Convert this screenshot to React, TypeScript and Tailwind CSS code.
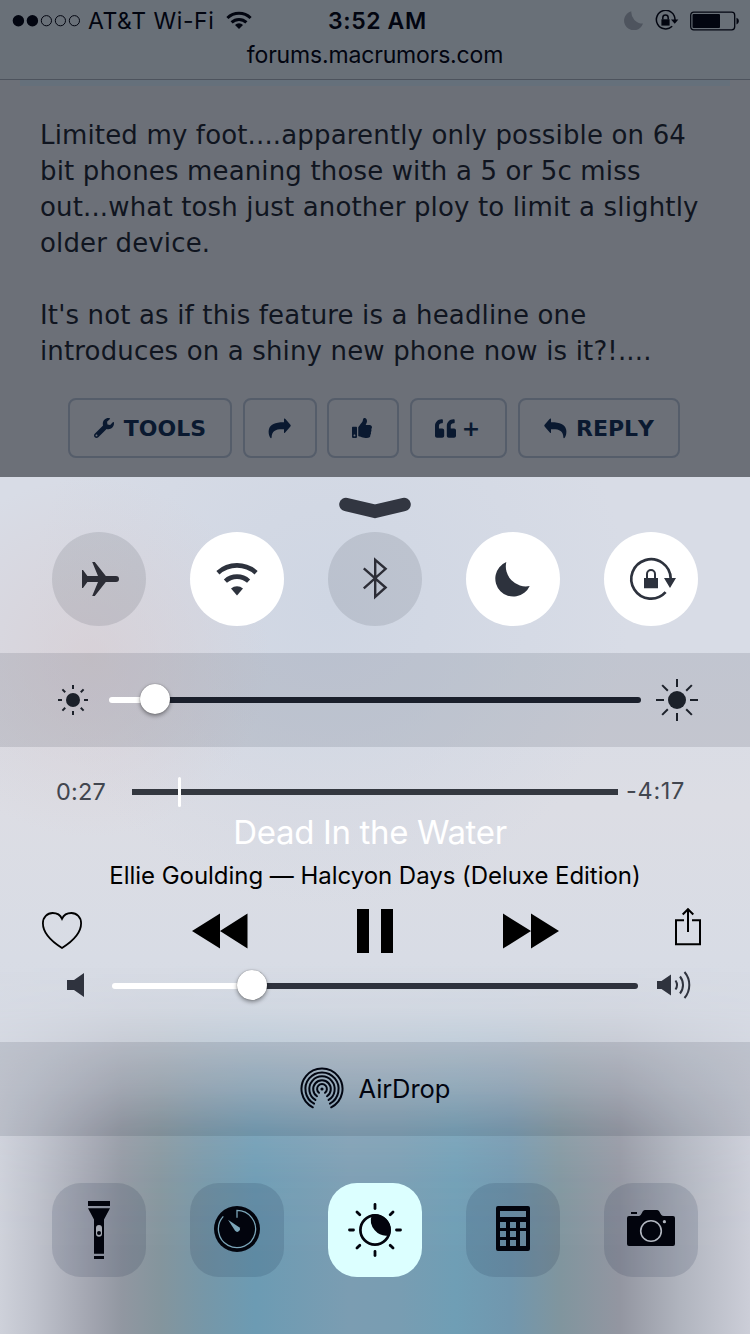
import * as React from 'react';
import { FaQuoteLeft, FaThumbsUp, FaWrench } from 'react-icons/fa';
import { twMerge } from 'tailwind-merge';

const SF = "font-['Inter','Liberation_Sans',sans-serif]";

interface SliderProps {
	value: number;
	className?: string;
	trackClassName?: string;
}

function Slider({ value, className, trackClassName }: SliderProps) {
	return (
		<div className={twMerge('relative flex h-1.5 shrink-0', className)}>
			<div className="h-1.5 rounded-l-[3px] bg-white" style={{ width: value }} />
			<div className={twMerge('h-1.5 flex-1 rounded-r-[3px]', trackClassName)} />
			<div
				className="absolute -top-[13px] size-[30px] -translate-x-1/2 rounded-full bg-white shadow-[0_2px_4px_rgba(0,0,0,0.4),0_0_1px_rgba(0,0,0,0.5)]"
				style={{ left: value }}
			/>
		</div>
	);
}

interface SunProps {
	size: number;
	core: number;
	inner: number;
	outer: number;
	className?: string;
}

function Sun({ size, core, inner, outer, className }: SunProps) {
	return (
		<svg
			width={size}
			height={size}
			viewBox={`${-size / 2} ${-size / 2} ${size} ${size}`}
			className={twMerge('shrink-0 text-[#1c212a]', className)}
		>
			<circle r={core} fill="currentColor" />
			{[0, 45, 90, 135, 180, 225, 270, 315].map((a) => (
				<line key={a} x1={inner} x2={outer} y1="0" y2="0" stroke="currentColor" strokeWidth="2" transform={`rotate(${a})`} />
			))}
		</svg>
	);
}

function StatusBar() {
	return (
		<div className="flex h-[42px] items-center pl-3">
			<svg width="70" height="14" viewBox="0 0 70 14" className="shrink-0">
				{[0, 1, 2, 3, 4].map((i) => (
					<circle
						key={i}
						cx={6.4 + i * 14}
						cy="6.7"
						r={i < 2 ? 5.7 : 5.1}
						fill={i < 2 ? '#020510' : 'none'}
						stroke={i < 2 ? 'none' : '#020510'}
						strokeWidth="1"
					/>
				))}
			</svg>
			<span className="ml-[6px] w-[138px] shrink-0 text-[23px] tracking-[0.55px] whitespace-nowrap">AT&amp;T Wi-Fi</span>
			<svg width="26" height="20" viewBox="0 0 26 20" className="-mt-[3px] shrink-0" fill="none" stroke="#020510" strokeWidth="3">
				<path d="M1.4 8a16.7 16.7 0 0 1 23.2 0" />
				<path d="M5.6 12.4a10.6 10.6 0 0 1 14.8 0" />
				<path d="M13 19l-4-4.1a5.6 5.6 0 0 1 8 0z" fill="#020510" stroke="none" />
			</svg>
			<span className="ml-[76px] w-[296px] shrink-0 text-[23px] font-semibold tracking-[0.6px] whitespace-nowrap">3:52 AM</span>
			<svg width="20" height="20" viewBox="0 0 20 20" className="-mt-0.5 shrink-0">
				<path d="M7.3 1.2A11.5 11.5 0 0 0 19 13.6 9.7 9.7 0 1 1 7.3 1.2z" fill="#4e545e" />
			</svg>
			<svg width="24" height="22" viewBox="0 0 24 22" className="ml-[11px] shrink-0" fill="none" stroke="#020510" strokeWidth="1.5">
				<path d="M20 10a9.3 9.3 0 1 0-2.8 6.3" />
				<path d="M16 9.6h7.4l-3.7 4.2z" fill="#020510" stroke="none" />
				<path d="M6.4 9.3h8.2v6.3H6.4z" fill="#020510" stroke="none" />
				<path d="M7.8 9.5V7.7a2.7 2.7 0 0 1 5.4 0v1.8" />
			</svg>
			<svg width="50" height="20" viewBox="0 0 50 20" className="-mt-px ml-[11px] shrink-0">
				<rect x="0.7" y="1.2" width="44" height="17.6" rx="3" fill="none" stroke="#020510" strokeWidth="1.3" />
				<rect x="2.5" y="3" width="27.5" height="14" rx="1" fill="#020510" />
				<path d="M46.5 6.7a3.6 3.6 0 0 1 0 6.8z" fill="#020510" />
			</svg>
		</div>
	);
}

function ShareArrow({ className }: { className?: string }) {
	return (
		<svg width="23" height="21" viewBox="0 0 23 21" fill="currentColor" className={className}>
			<path d="M16 .7c.6-.4 1 0 1.4.4l5 5.6c.5.6.5 1.1 0 1.7l-5 5.9c-.4.5-.8.8-1.4.4v-3.5C8.500 10.800 3.800 12 3.600 19.500c0 .9-.9 1-1.300.3C.8 17.500.3 14.500.8 11.800 2 6.200 7.500 4.200 16 4.300z" />
		</svg>
	);
}

function PostButton({ className, children }: { className?: string; children: React.ReactNode }) {
	return (
		<div
			className={twMerge(
				'flex h-[60px] shrink-0 items-center justify-center rounded-lg border-2 border-[#555d6a] text-[22px] font-bold text-[#0a1930] [font-kerning:none]',
				className
			)}
		>
			{children}
		</div>
	);
}

function Toggle({ on, children }: { on?: boolean; children: React.ReactNode }) {
	return (
		<div className={twMerge('size-[94px] rounded-full', on ? 'bg-white text-[#2d323d]' : 'bg-[#101828]/11 text-[#2c2d36]')}>
			<svg width="94" height="94" viewBox="0 0 94 94" fill="none" stroke="none">
				{children}
			</svg>
		</div>
	);
}

function Shortcut({ on, children }: { on?: boolean; children: React.ReactNode }) {
	return (
		<div className={twMerge('size-[94px] rounded-[29px]', on ? 'bg-[#dcffff]' : 'bg-[#001030]/12')}>
			<svg width="94" height="94" viewBox="0 0 94 94" fill="#02040d">
				{children}
			</svg>
		</div>
	);
}

function AirDropIcon() {
	return (
		<svg width="44" height="44" viewBox="-22 -22 44 44" fill="none" stroke="#020612" strokeWidth="2" strokeLinecap="round">
			<circle r="1.6" fill="#020612" stroke="none" />
			<path d="M-3 3.8A4.9 4.9 0 1 1 3 3.8" />
			<path d="M-5 7.3A8.8 8.8 0 1 1 5 7.3" />
			<path d="M-6.6 10.9A12.7 12.7 0 1 1 6.6 10.9" />
			<path d="M-7.9 14.6A16.6 16.6 0 1 1 7.9 14.6" />
			<path d="M-9.2 18.3A20.5 20.5 0 1 1 9.2 18.3" />
		</svg>
	);
}

export default function App() {
	return (
		<div className={`flex h-[1334px] w-[750px] flex-col overflow-hidden bg-[#6c7078] text-[#020510] ${SF}`}>
			<header className="h-20 shrink-0 border-b border-[#4d535d] bg-[#697078]">
				<StatusBar />
				<p className="-mt-[3px] text-center text-[23px] leading-8 tracking-[-0.17px]">forums.macrumors.com</p>
			</header>

			<main className="h-[397px] shrink-0 font-['DejaVu_Sans',sans-serif]">
				<div className="ml-5 h-1.5 w-[710px] bg-[#65707b]" />
				<div className="ml-10 pt-[31px] text-[26px] leading-9 tracking-[0.15px] whitespace-nowrap text-[#101520]">
					<p>Limited my foot....apparently only possible on 64</p>
					<p>bit phones meaning those with a 5 or 5c miss</p>
					<p>out...what tosh just another ploy to limit a slightly</p>
					<p>older device.</p>
					<p className="mt-9">It's not as if this feature is a headline one</p>
					<p>introduces on a shiny new phone now is it?!....</p>
				</div>
				<div className="mt-[29px] ml-[68px] flex">
					<PostButton className="w-[164px] gap-2.5">
						<FaWrench size={20} />
						TOOLS
					</PostButton>
					<PostButton className="ml-[11px] w-[74px] pr-0.5">
						<ShareArrow />
					</PostButton>
					<PostButton className="ml-2.5 w-[72px]">
						<FaThumbsUp size={20} className="mr-0.5" />
					</PostButton>
					<PostButton className="ml-[11px] w-[97px] gap-1.5 pr-0.5">
						<FaQuoteLeft size={21} />
						<span>+</span>
					</PostButton>
					<PostButton className="ml-[11px] w-[162px] gap-[9px]">
						<ShareArrow className="-scale-x-100" />
						REPLY
					</PostButton>
				</div>
			</main>

			<section className="relative isolate h-[857px] shrink-0 bg-[radial-gradient(circle_at_90px_180px,rgba(216,204,208,0.65),transparent_180px),radial-gradient(circle_at_330px_130px,#cfd6e3,transparent_300px),linear-gradient(#d8dce6,#d8dce6_170px,#dcdde4_330px,#d8dce5_480px,#d2d7e1)]">
				{/* wallpaper glow behind the lower part of the panel */}
				<div className="absolute inset-x-0 bottom-0 -z-10 h-[370px] bg-[linear-gradient(90deg,#ced1da_0,#bfc2cc_35px,#a0a3ae_95px,#9197a1_122px,#84959d_160px,#7697a8_205px,#6c9bb3_255px,#7b9db2_350px,#789db2_400px,#6f9eb5_455px,#7197ae_510px,#80959e_560px,#9396a1_620px,#b0b4be_680px,#ccced8_750px)] [mask-image:linear-gradient(transparent,rgba(0,0,0,0.06)_45px,rgba(0,0,0,0.2)_78px,rgba(0,0,0,0.5)_126px,rgba(0,0,0,0.85)_168px,rgba(0,0,0,0.95)_215px,black_290px)]" />

				<div className="flex h-[55px] justify-center pt-5">
					<svg width="72" height="23" viewBox="0 0 72 23">
						<path d="M7 7.5L36 14.3 65 7.5" fill="none" stroke="#323641" strokeWidth="13.6" strokeLinecap="round" />
					</svg>
				</div>

				<div className="flex h-[121px] justify-between px-[52px]">
					<Toggle>
						<path
							fill="currentColor"
							d="M30 38h1l4.4 6H46l-5.8-14h2.6l11 14H64a3 3 0 0 1 0 6H53.8l-11 14h-2.6L46 50H35.4l-4.4 6H30z"
						/>
					</Toggle>
					<Toggle on>
						<g stroke="currentColor" strokeWidth="4.6">
							<path d="M27.9 40.7a28.5 28.5 0 0 1 38.2 0" />
							<path d="M35.4 49.1a17.2 17.2 0 0 1 23.2 0" />
						</g>
						<path fill="currentColor" d="M47 63.5l-6-7.1a9.6 9.6 0 0 1 12 0z" />
					</Toggle>
					<Toggle>
						<path stroke="currentColor" strokeWidth="2.4" d="M35.8 36.3L57.6 55.5 47.2 64.8V27.8L57.6 36.8 35.8 56.3" />
					</Toggle>
					<Toggle on>
						<path fill="currentColor" d="M40.3 30A20 20 0 0 0 63.7 54 18 18 0 1 1 40.3 30z" />
					</Toggle>
					<Toggle on>
						<path stroke="currentColor" strokeWidth="2.7" d="M66.7 46.5A19.7 19.7 0 1 0 61.6 60.2" />
						<path fill="currentColor" d="M60 46h12l-6 10zM40 46h14v10.3H40z" />
						<path stroke="currentColor" strokeWidth="2" d="M43 46.5V42a4 4 0 0 1 8 0v4.5" />
					</Toggle>
				</div>

				<div className="flex h-[94px] items-center bg-[#051025]/11 pl-[58px]">
					<Sun size={30} core={7} inner={11} outer={15} />
					<Slider value={46} className="ml-[21px] w-[532px]" trackClassName="bg-[#1a1f2b]" />
					<Sun size={42} core={9} inner={13} outer={21} className="ml-[15px]" />
				</div>

				<div className="h-[295px]">
					<div className="flex h-[68px] items-center pt-[22px] text-[23.5px] text-[#42464f]">
						<span className="ml-14 w-[76px] tracking-[0.2px]">0:27</span>
						<div className="relative h-1.5 w-[486px] bg-[#343840]">
							<div className="absolute -top-3 left-[46px] h-[30px] w-[3px] rounded-full bg-white" />
						</div>
						<span className="-mt-0.5 ml-2 tracking-[0.7px]">-4:17</span>
					</div>
					<p className="h-[34px] -translate-x-[5px] text-center text-[33px] leading-[35px] tracking-[-0.35px] text-white">
						Dead In the Water
					</p>
					<p className="mt-[9px] h-[34px] text-center text-[24px] leading-[36px] tracking-[-0.04px] text-black">
						Ellie Goulding — Halcyon Days (Deluxe Edition)
					</p>

					<div className="flex h-[77px] items-center pt-[1px] pl-[41px]">
						<svg width="42" height="40" viewBox="0 0 42 40" fill="none" stroke="#000" strokeWidth="1.8" className="-mt-0.5">
							<path d="M21 38C13 33 1.9 24 1.9 13.3 1.9 7 6.3 3 11.6 3 16.3 3 19.6 5.6 21 8.8 22.4 5.6 25.7 3 30.4 3 35.7 3 40.1 7 40.1 13.3 40.1 24 29 33 21 38z" />
						</svg>
						<svg width="56" height="36" viewBox="0 0 56 36" className="-mt-px ml-[109px]">
							<path d="M28 .5v35L0 18zM55.5 .5v35L28 18z" />
						</svg>
						<div className="ml-[109px] flex gap-3">
							<div className="h-11 w-3 bg-black" />
							<div className="h-11 w-3 bg-black" />
						</div>
						<svg width="56" height="36" viewBox="0 0 56 36" className="-mt-px ml-[110px]">
							<path d="M0 .5v35L28 18zM28 .5v35L56 18z" />
						</svg>
						<svg width="28" height="40" viewBox="0 0 28 40" className="-mt-2.5 ml-[115px]" fill="none" stroke="#000" strokeWidth="2">
							<path d="M10 14.3H2v24h24v-24h-8M14 26V3.5M8.7 8.5L14 3.2l5.3 5.3" />
						</svg>
					</div>

					<div className="flex h-[34px] items-center pl-[67px]">
						<svg width="17" height="24" viewBox="0 0 17 24" fill="#2f333e" className="-mt-0.5">
							<path d="M0 7h7l10-7v24L7 17H0z" />
						</svg>
						<Slider value={140} className="ml-7 w-[526px]" trackClassName="bg-[#2e323d]" />
						<svg width="36" height="28" viewBox="0 0 36 28" className="-mt-0.5 ml-[19px]" fill="none" stroke="#2f333e" strokeWidth="2">
							<path d="M0 10h4.5L14 3.5v21L4.5 18H0z" fill="#2f333e" stroke="none" />
							<path d="M18.5 9.5a8 8 0 0 1 0 9M23 5.5a13.5 13.5 0 0 1 0 17M27.5 1a20 20 0 0 1 0 26" />
						</svg>
					</div>
				</div>

				<div className="flex h-[94px] items-center bg-[#051025]/11 pl-[300px]">
					<AirDropIcon />
					<span className="ml-[14.5px] text-[25.5px] tracking-[-0.1px]">AirDrop</span>
				</div>

				<div className="flex justify-between px-[52px] pt-[47px]">
					<Shortcut>
						<path d="M36 18h22v5H36zM36 25.2h22L52 36.5v34.3H42V36.5zM42 73h10v3H42z" />
						<rect x="44" y="42" width="6" height="11.7" rx="3" fill="#a5a9b2" />
						<circle cx="47" cy="50" r="2" />
					</Shortcut>
					<Shortcut>
						<circle cx="47" cy="46" r="23" />
						<path d="M47 34.8V27.4A18.6 18.6 0 1 1 33.3 33.4" fill="none" stroke="#7ba5b8" strokeWidth="1.3" />
						<path d="M38 36.7l11.2 7.5a2.7 2.7 0 1 1-4.1 3.6z" fill="#7ba5b8" />
					</Shortcut>
					<Shortcut on>
						<circle cx="47" cy="47" r="14.6" fill="none" stroke="#02040d" strokeWidth="2.7" />
						<path d="M44 31.5A16 16 0 0 1 62 52.2 15.5 15.5 0 0 1 44 31.5z" />
						{[0, 45, 90, 135, 180, 225, 270, 315].map((a) => (
							<line
								key={a}
								x1="68.5"
								x2="72.5"
								y1="47"
								y2="47"
								stroke="#02040d"
								strokeWidth="2.8"
								strokeLinecap="round"
								transform={`rotate(${a} 47 47)`}
							/>
						))}
					</Shortcut>
					<Shortcut>
						<path
							fillRule="evenodd"
							d="M32 23h30a2 2 0 0 1 2 2v41a2 2 0 0 1-2 2H32a2 2 0 0 1-2-2V25a2 2 0 0 1 2-2zM34 28v6h26v-6zM34 39v6h6v-6zM44 39v6h6v-6zM54 39v6h6v-6zM34 48v6h6v-6zM44 48v6h6v-6zM54 48v15h6V48zM34 57v6h6v-6zM44 57v6h6v-6z"
						/>
					</Shortcut>
					<Shortcut>
						<path d="M27 29h6v2h-6zM25 33h9.5c2 0 2.5-1.5 3.5-3.3S39.5 27 41 27h12c1.5 0 2 1 3 2.7S57.5 33 60 33h9a2 2 0 0 1 2 2v26a2 2 0 0 1-2 2H25a2 2 0 0 1-2-2V35a2 2 0 0 1 2-2z" />
						<circle cx="47" cy="48" r="10.3" fill="none" stroke="#b1b6bf" strokeWidth="1.6" />
						<circle cx="60.4" cy="38.7" r="1.6" fill="#b1b6bf" />
					</Shortcut>
				</div>
			</section>
		</div>
	);
}
